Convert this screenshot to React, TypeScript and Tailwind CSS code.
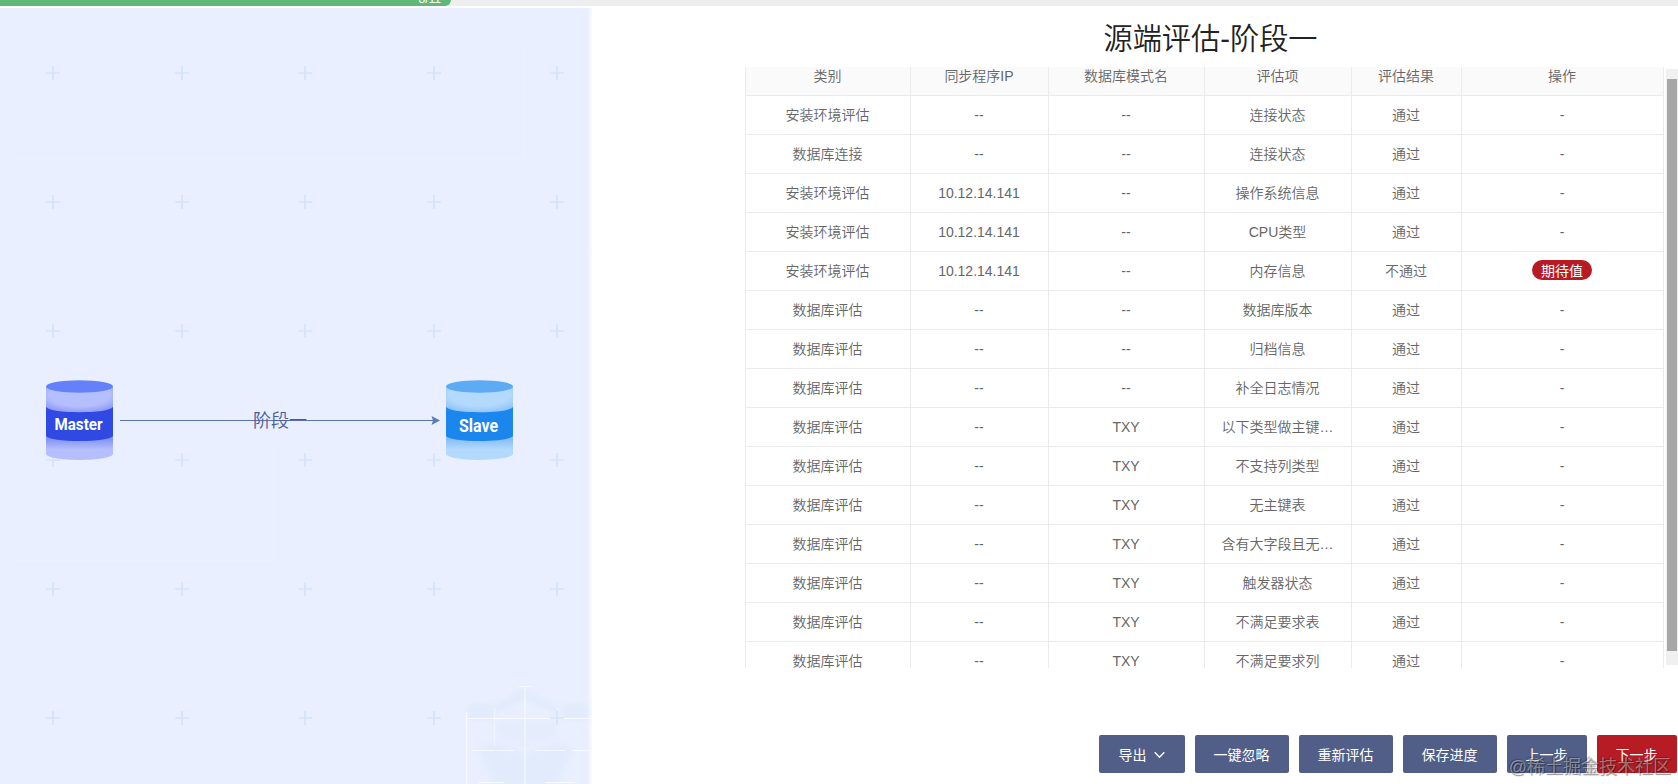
import React from "react";

type Row = [string, string, string, string, string, string];

const headers: Row = ["类别", "同步程序IP", "数据库模式名", "评估项", "评估结果", "操作"];

const rows: Row[] = [
  ["安装环境评估", "--", "--", "连接状态", "通过", "-"],
  ["数据库连接", "--", "--", "连接状态", "通过", "-"],
  ["安装环境评估", "10.12.14.141", "--", "操作系统信息", "通过", "-"],
  ["安装环境评估", "10.12.14.141", "--", "CPU类型", "通过", "-"],
  ["安装环境评估", "10.12.14.141", "--", "内存信息", "不通过", "期待值"],
  ["数据库评估", "--", "--", "数据库版本", "通过", "-"],
  ["数据库评估", "--", "--", "归档信息", "通过", "-"],
  ["数据库评估", "--", "--", "补全日志情况", "通过", "-"],
  ["数据库评估", "--", "TXY", "以下类型做主键…", "通过", "-"],
  ["数据库评估", "--", "TXY", "不支持列类型", "通过", "-"],
  ["数据库评估", "--", "TXY", "无主键表", "通过", "-"],
  ["数据库评估", "--", "TXY", "含有大字段且无…", "通过", "-"],
  ["数据库评估", "--", "TXY", "触发器状态", "通过", "-"],
  ["数据库评估", "--", "TXY", "不满足要求表", "通过", "-"],
  ["数据库评估", "--", "TXY", "不满足要求列", "通过", "-"],
];

const grid = "grid h-[39px] shrink-0 grid-cols-[165px_138px_156px_147px_110px_202px]";
const cell =
  "flex items-center justify-center border-r border-b border-[#ebebeb] pr-px whitespace-nowrap";

function Backdrop() {
  const xs = [53, 182, 305, 434, 557];
  const ys = [65, 194, 323, 452, 581, 710];
  return (
    <svg className="absolute inset-0" width="592" height="776" viewBox="0 0 592 776">
      <defs>
        <filter id="soften" x="-10%" y="-10%" width="120%" height="120%">
          <feGaussianBlur stdDeviation="2.5" />
        </filter>
      </defs>
      <g fill="#dde9fc" opacity="0.6" filter="url(#soften)">
        <path d="M468 696h26v16h-26zM562 696h26v16h-26z" />
        <path d="M494 698l31-19 32 19v8l-32-14-31 14z" />
        <path d="M496 712h60v16l-31 12-29-12z" opacity=".6" />
        <path d="M478 742l16-8 31 12 32-12 16 8-16 34h-63z" />
      </g>
      <g stroke="#f6f9ff" strokeWidth="1.2" fill="none">
        <path d="M466.500 704v72M525 678v98" />
        <path d="M494.500 700v38M557.500 700v10" opacity=".6" />
        <path d="M466 710.500h125M472 742.500h42M535 742.500h30M572 742.500h18M478 774.500h26M545 774.500h30M519 678.500h14" />
      </g>
      <g stroke="#edf1fe" strokeWidth="1" fill="none">
        <path d="M15 150.500h510M523.500 40v110M273.500 440v112M15 552.500h258" />
      </g>
      <g stroke="#d5e3f7" strokeWidth="1.7">
        {ys.map((y) =>
          xs.map((x) => <path key={`${x}-${y}`} d={`M${x - 7} ${y}h14M${x} ${y - 7}v14`} />)
        )}
      </g>
    </svg>
  );
}

interface DatabaseProps {
  id: string;
  label: string;
  top: string;
  band: string;
  body: string;
  shade: string;
  size: number;
  textWidth: number;
  baseline: number;
}

function Database({ id, label, top, band, body, shade, size, textWidth, baseline }: DatabaseProps) {
  return (
    <svg width="67" height="80" viewBox="0 0 67 80">
      <defs>
        <radialGradient id={`${id}-upper`} cx=".5" cy=".3" r=".75" gradientTransform="translate(0 0) scale(1 1)">
          <stop offset="0" stopColor={body} />
          <stop offset=".6" stopColor={body} />
          <stop offset="1" stopColor={shade} />
        </radialGradient>
        <linearGradient id={`${id}-lower`} x1="0" y1="0" x2="0" y2="1">
          <stop offset="0" stopColor={shade} />
          <stop offset=".2" stopColor={shade} />
          <stop offset=".6" stopColor={body} />
          <stop offset="1" stopColor={body} />
        </linearGradient>
      </defs>
      <path d="M0 54v20c0 3 15 6 33.500 6s33.500-3 33.500-6v-20z" fill={`url(#${id}-lower)`} />
      <path d="M0 7h67v26H0z" fill={`url(#${id}-upper)`} />
      <path d="M0 27c3 3.500 16 5.200 33.500 5.200s30.500-1.700 33.500-5.200v29c-3 3.200-16 5-33.500 5s-30.500-1.800-33.500-5z" fill={band} />
      <ellipse cx="33.500" cy="6.500" rx="33.500" ry="6.300" fill={top} />
      <text
        x="32.500"
        y={baseline}
        textAnchor="middle"
        textLength={textWidth}
        lengthAdjust="spacingAndGlyphs"
        fontSize={size}
        fontWeight="700"
        fill="#fff"
        className="font-['Roboto',sans-serif]"
      >
        {label}
      </text>
    </svg>
  );
}

function Button({ children, className }: { children: React.ReactNode; className: string }) {
  return (
    <button
      className={`flex h-[38px] items-center justify-center rounded-[2px] pt-[2px] pr-px text-sm whitespace-nowrap text-white ${className}`}
    >
      {children}
    </button>
  );
}

export default function App() {
  return (
    <div className="relative flex h-[784px] w-[1678px] flex-col overflow-hidden bg-white font-['Liberation_Sans','Noto_Sans_CJK_SC',sans-serif] text-[#666]">
      <div className="h-[6px] shrink-0 bg-[#eee]">
        <div className="flex h-full w-[451px] items-end justify-end overflow-hidden rounded-br-[8px] bg-[#5fb878] pr-[10px] text-xs leading-[8px] text-white">
          <span className="translate-y-[-3px]">8/11</span>
        </div>
      </div>

      <div className="flex min-h-0 flex-1 pt-[2px]">
        <aside className="relative w-[592px] shrink-0 overflow-hidden bg-linear-to-r from-[#e9effe] from-[99.2%] to-[#f8faff]">
          <Backdrop />
          <div className="relative flex items-start pt-[372px] pl-[46px]">
            <Database id="master" label="Master" top="#6580fb" band="#3049e3" body="#b6bffd" shade="#8394f6" size={16} textWidth={48} baseline={49.5} />
            <div className="relative ml-[7px] h-[80px] w-[320px]">
              <svg width="320" height="80" viewBox="0 0 320 80">
                <path d="M0 40.500h314" stroke="#5d73ae" strokeWidth="1" />
                <path d="M311.500 36l8.500 4.500-8.500 4.500 1.500-4.500z" fill="#5d7ab8" />
              </svg>
              <span className="absolute top-[29px] left-[133px] text-[18px] leading-6 font-[350] whitespace-nowrap text-[#4a5b97]">
                阶段一
              </span>
            </div>
            <div className="ml-[6px]">
              <Database id="slave" label="Slave" top="#5eaaf3" band="#1c86ef" body="#b3d9fd" shade="#87bff8" size={18.5} textWidth={39} baseline={51.5} />
            </div>
          </div>
        </aside>

        <main className="flex min-w-0 flex-1 flex-col pl-[153px]">
          <h1 className="flex h-[59px] shrink-0 items-center justify-center pt-[5px] pr-[2px] text-[29.2px] font-[350] whitespace-nowrap text-[#222]">
            源端评估-阶段一
          </h1>

          <div className="flex h-[601px] shrink-0">
            <div className="flex h-full w-[919px] flex-col justify-start overflow-hidden border-l border-[#ebebeb] text-sm font-[350]">
              <div className="-mt-[10px]">
                <div className={`${grid} bg-[#fafafa]`}>
                  {headers.map((h) => (
                    <div key={h} className={cell}>{h}</div>
                  ))}
                </div>
                {rows.map((row, r) => (
                  <div key={r} className={grid}>
                    {row.map((value, c) => (
                      <div key={c} className={cell}>
                        {value === "期待值" ? (
                          <span className="mb-[2px] flex h-5 w-[60px] items-center justify-center rounded-full bg-[#b71c25] pt-px font-normal text-white">
                            {value}
                          </span>
                        ) : (
                          value
                        )}
                      </div>
                    ))}
                  </div>
                ))}
              </div>
            </div>
            <div className="mt-[2px] ml-[2px] h-[596px] w-[12px] bg-[#f0f0f0] pt-[10px] pl-[1px]">
              <div className="h-[572px] w-[10px] bg-[#a6a6a6]" />
            </div>
          </div>

          <div className="mt-[67px] flex justify-end gap-[10px] pr-[1px]">
            <Button className="w-[86px] gap-[7px] bg-[#515e87]">
              导出
              <svg width="11" height="8" viewBox="0 0 11 8" fill="none" stroke="currentColor" strokeWidth="1.300">
                <path d="M.7 1.200l4.800 5 4.800-5" />
              </svg>
            </Button>
            <Button className="w-[94px] bg-[#515e87]">一键忽略</Button>
            <Button className="w-[94px] bg-[#515e87]">重新评估</Button>
            <Button className="w-[94px] bg-[#515e87]">保存进度</Button>
            <Button className="w-[80px] bg-[#515e87]">上一步</Button>
            <Button className="w-[80px] bg-[#b71c25]">下一步</Button>
          </div>
        </main>
      </div>

      <div className="pointer-events-none absolute right-[7px] bottom-[5px] text-[18px] leading-[24px] whitespace-nowrap text-white/40 [text-shadow:1px_1px_1px_rgba(0,0,0,0.45),-1px_-1px_1px_rgba(0,0,0,0.25)]">
        @稀土掘金技术社区
      </div>
    </div>
  );
}
